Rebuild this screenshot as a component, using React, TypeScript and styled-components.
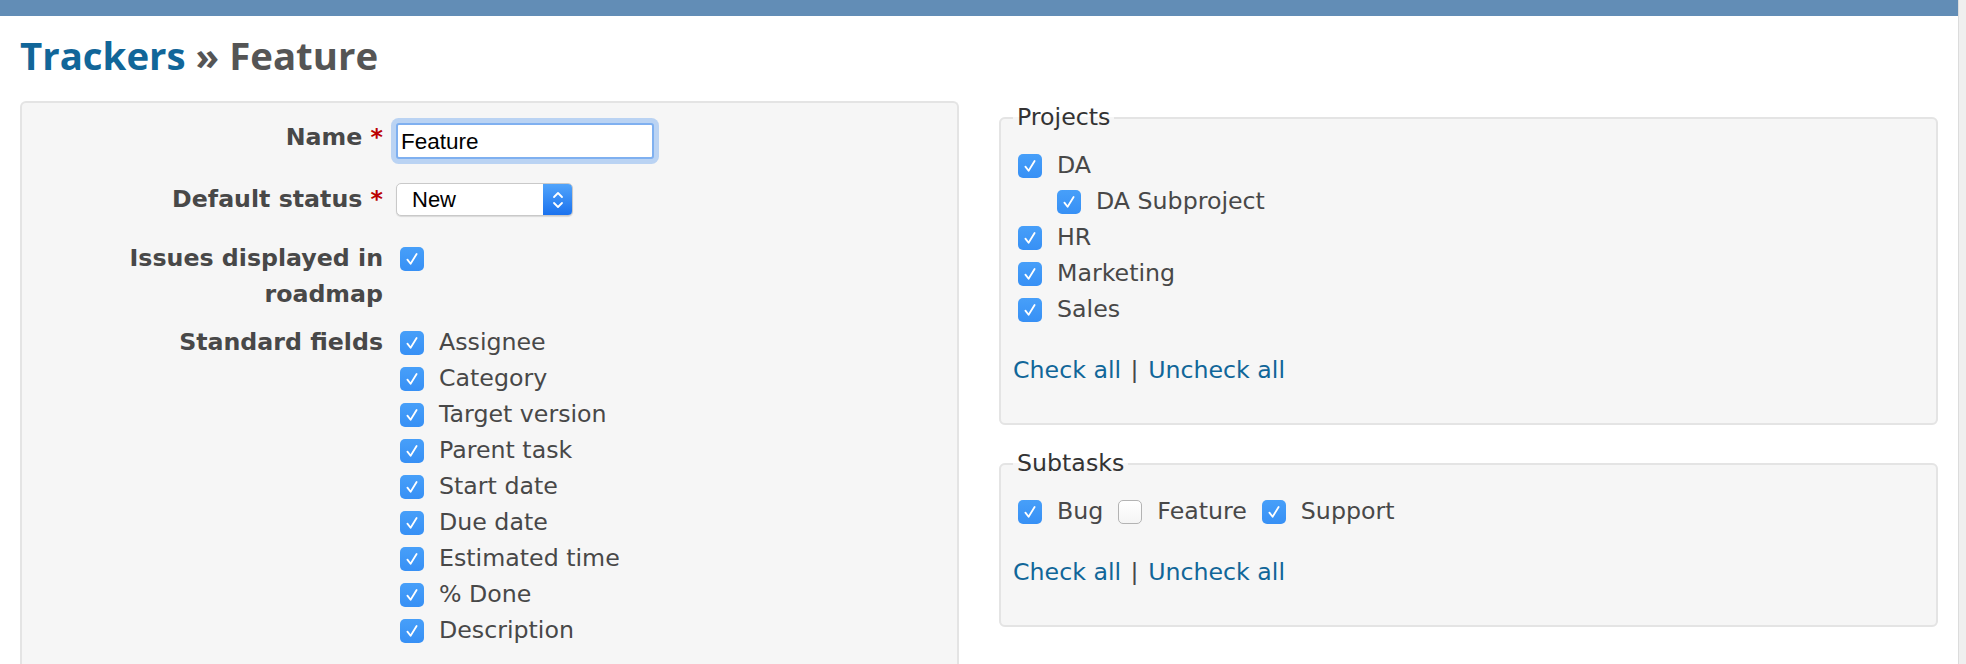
import React from 'react'
import styled, { createGlobalStyle } from 'styled-components'

const GlobalStyle = createGlobalStyle`
    html, body {
        margin: 0;
        padding: 0;
        overflow: hidden;
        background: #fff;
    }
    body {
        font-family: 'DejaVu Sans', Verdana, sans-serif;
        font-size: 23.7px;
        color: #484848;
    }
`

const Page = styled.div`
    display: flex;
    min-height: 100vh;
`

const Main = styled.div`
    flex: 1;
    min-width: 0;
`

const Gutter = styled.div`
    flex: none;
    width: 8px;
    box-sizing: border-box;
    background: #efefef;
    border-left: 1px solid #dcdcdc;
`

const TopBar = styled.div`
    height: 16px;
    background: #628db6;
`

const Content = styled.div`
    padding: 0 20px;
`

const Title = styled.h2`
    margin: 15px 0 22px;
    font-family: 'Open Sans', 'DejaVu Sans', sans-serif;
    font-weight: 700;
    font-size: 38.4px;
    line-height: 48px;
    color: #555;

    a {
        color: #169;
        text-decoration: none;
    }
`

const Split = styled.div`
    display: grid;
    grid-template-columns: 1fr 1fr;
    column-gap: 40px;
    align-items: start;
`

const FormBox = styled.div`
    background: #f6f6f6;
    border: 2px solid #e4e4e4;
    border-bottom: none;
    border-radius: 6px 6px 0 0;
    padding: 14px 0 24px;
`

const Row = styled.div<{ $mt?: number }>`
    display: grid;
    grid-template-columns: 361px 1fr;
    column-gap: 12px;
    align-items: start;
    margin-top: ${({ $mt }) => $mt ?? 0}px;
`

const Label = styled.label<{ $mt?: number }>`
    font-weight: bold;
    text-align: right;
    line-height: 36px;
    margin-top: ${({ $mt }) => $mt ?? 0}px;
`

const Required = styled.span`
    color: #bb0000;
`

const TextInput = styled.input`
    box-sizing: border-box;
    width: 258px;
    height: 36px;
    margin: 6px 0 0 1px;
    padding: 2px 3px 0;
    border: 2px solid #7fb0f0;
    border-radius: 3px;
    box-shadow: 0 0 0 5px rgba(125, 175, 240, 0.5);
    outline: none;
    background: #fff;
    font-family: 'Liberation Sans', Arial, sans-serif;
    font-size: 22.5px;
    color: #000;
`

const Select = styled.div`
    box-sizing: border-box;
    display: flex;
    width: 177px;
    height: 33px;
    margin: 2px 0 0 1px;
    border: 1px solid #c9c9c9;
    border-radius: 5px;
    background: #fff;
    box-shadow: 0 1px 1px rgba(0, 0, 0, 0.12);
    overflow: hidden;
`

const SelectValue = styled.span`
    flex: 1;
    padding-left: 15px;
    font-family: 'Liberation Sans', Arial, sans-serif;
    font-size: 22px;
    line-height: 31px;
    color: #000;
`

const SelectArrows = styled.span`
    flex: none;
    width: 29px;
    display: flex;
    align-items: center;
    justify-content: center;
    background: linear-gradient(#51a4fb, #1b72ee);
`

const Tick = styled.span<{ $checked: boolean }>`
    flex: none;
    box-sizing: border-box;
    width: 24px;
    height: 24px;
    margin: 2px 0 0 5px;
    border-radius: 5px;
    display: inline-flex;
    align-items: center;
    justify-content: center;
    background: ${({ $checked }) =>
        $checked ? 'linear-gradient(#479ff9, #3790f5)' : 'linear-gradient(#fff, #f4f4f4)'};
    border: ${({ $checked }) => ($checked ? 'none' : '1px solid #b3b3b3')};
`

const Item = styled.div<{ $indent?: number }>`
    display: flex;
    align-items: center;
    gap: 15px;
    height: 36px;
    line-height: 36px;
    padding-left: ${({ $indent }) => $indent ?? 0}px;
`

const InlineList = styled.div`
    display: flex;
    column-gap: 10px;
`

const Fieldset = styled.fieldset<{ $mt?: number }>`
    margin: ${({ $mt }) => $mt ?? 0}px 0 0;
    padding: 13px 12px 35px;
    min-width: 0;
    border: 2px solid #e4e4e4;
    border-radius: 6px;
    background: #f6f6f6;
`

const Legend = styled.legend`
    padding: 0 4px;
    font-size: 23.7px;
    line-height: 33px;
    color: #333;
`

const Links = styled.div`
    margin-top: 25px;
    line-height: 36px;

    a {
        color: #169;
        text-decoration: none;
    }
`

const Sep = styled.span`
    margin: 0 2px;
`

const Check = ({ checked = true }: { checked?: boolean }) => (
    <Tick $checked={checked}>
        {checked && (
            <svg width="24" height="24" viewBox="0 0 24 24">
                <path
                    d="M7.4 12.6l3.2 4.2L16.6 7"
                    fill="none"
                    stroke="#fff"
                    strokeWidth="1.8"
                    strokeLinecap="round"
                    strokeLinejoin="round"
                />
            </svg>
        )}
    </Tick>
)

const CheckItem = ({ label, checked = true, indent }: { label?: string; checked?: boolean; indent?: number }) => (
    <Item $indent={indent}>
        <Check checked={checked} />
        {label && <span>{label}</span>}
    </Item>
)

const CheckLinks = () => (
    <Links>
        <a href="#">Check all</a> <Sep>|</Sep> <a href="#">Uncheck all</a>
    </Links>
)

const standardFields = [
    'Assignee',
    'Category',
    'Target version',
    'Parent task',
    'Start date',
    'Due date',
    'Estimated time',
    '% Done',
    'Description',
]

const projects = [
    { name: 'DA', indent: 0 },
    { name: 'DA Subproject', indent: 39 },
    { name: 'HR', indent: 0 },
    { name: 'Marketing', indent: 0 },
    { name: 'Sales', indent: 0 },
]

const subtasks = [
    { name: 'Bug', checked: true },
    { name: 'Feature', checked: false },
    { name: 'Support', checked: true },
]

const App = () => (
    <>
        <GlobalStyle />
        <Page>
            <Main>
                <TopBar />
                <Content>
                    <Title>
                        <a href="#">Trackers</a> » Feature
                    </Title>
                    <Split>
                        <FormBox>
                            <Row>
                                <Label $mt={2}>
                                    Name <Required>*</Required>
                                </Label>
                                <TextInput value="Feature" readOnly />
                            </Row>
                            <Row $mt={22}>
                                <Label>
                                    Default status <Required>*</Required>
                                </Label>
                                <Select>
                                    <SelectValue>New</SelectValue>
                                    <SelectArrows>
                                        <svg width="14" height="22" viewBox="0 0 14 22">
                                            <path
                                                d="M3 8l4-4 4 4M3 14l4 4 4-4"
                                                fill="none"
                                                stroke="#fff"
                                                strokeWidth="1.8"
                                                strokeLinecap="round"
                                                strokeLinejoin="round"
                                            />
                                        </svg>
                                    </SelectArrows>
                                </Select>
                            </Row>
                            <Row $mt={23}>
                                <Label>Issues displayed in roadmap</Label>
                                <CheckItem />
                            </Row>
                            <Row $mt={12}>
                                <Label>Standard fields</Label>
                                <div>
                                    {standardFields.map((f) => (
                                        <CheckItem key={f} label={f} />
                                    ))}
                                </div>
                            </Row>
                        </FormBox>
                        <div>
                            <Fieldset>
                                <Legend>Projects</Legend>
                                {projects.map((p) => (
                                    <CheckItem key={p.name} label={p.name} indent={p.indent} />
                                ))}
                                <CheckLinks />
                            </Fieldset>
                            <Fieldset $mt={22}>
                                <Legend>Subtasks</Legend>
                                <InlineList>
                                    {subtasks.map((s) => (
                                        <CheckItem key={s.name} label={s.name} checked={s.checked} />
                                    ))}
                                </InlineList>
                                <CheckLinks />
                            </Fieldset>
                        </div>
                    </Split>
                </Content>
            </Main>
            <Gutter />
        </Page>
    </>
)

export default App
